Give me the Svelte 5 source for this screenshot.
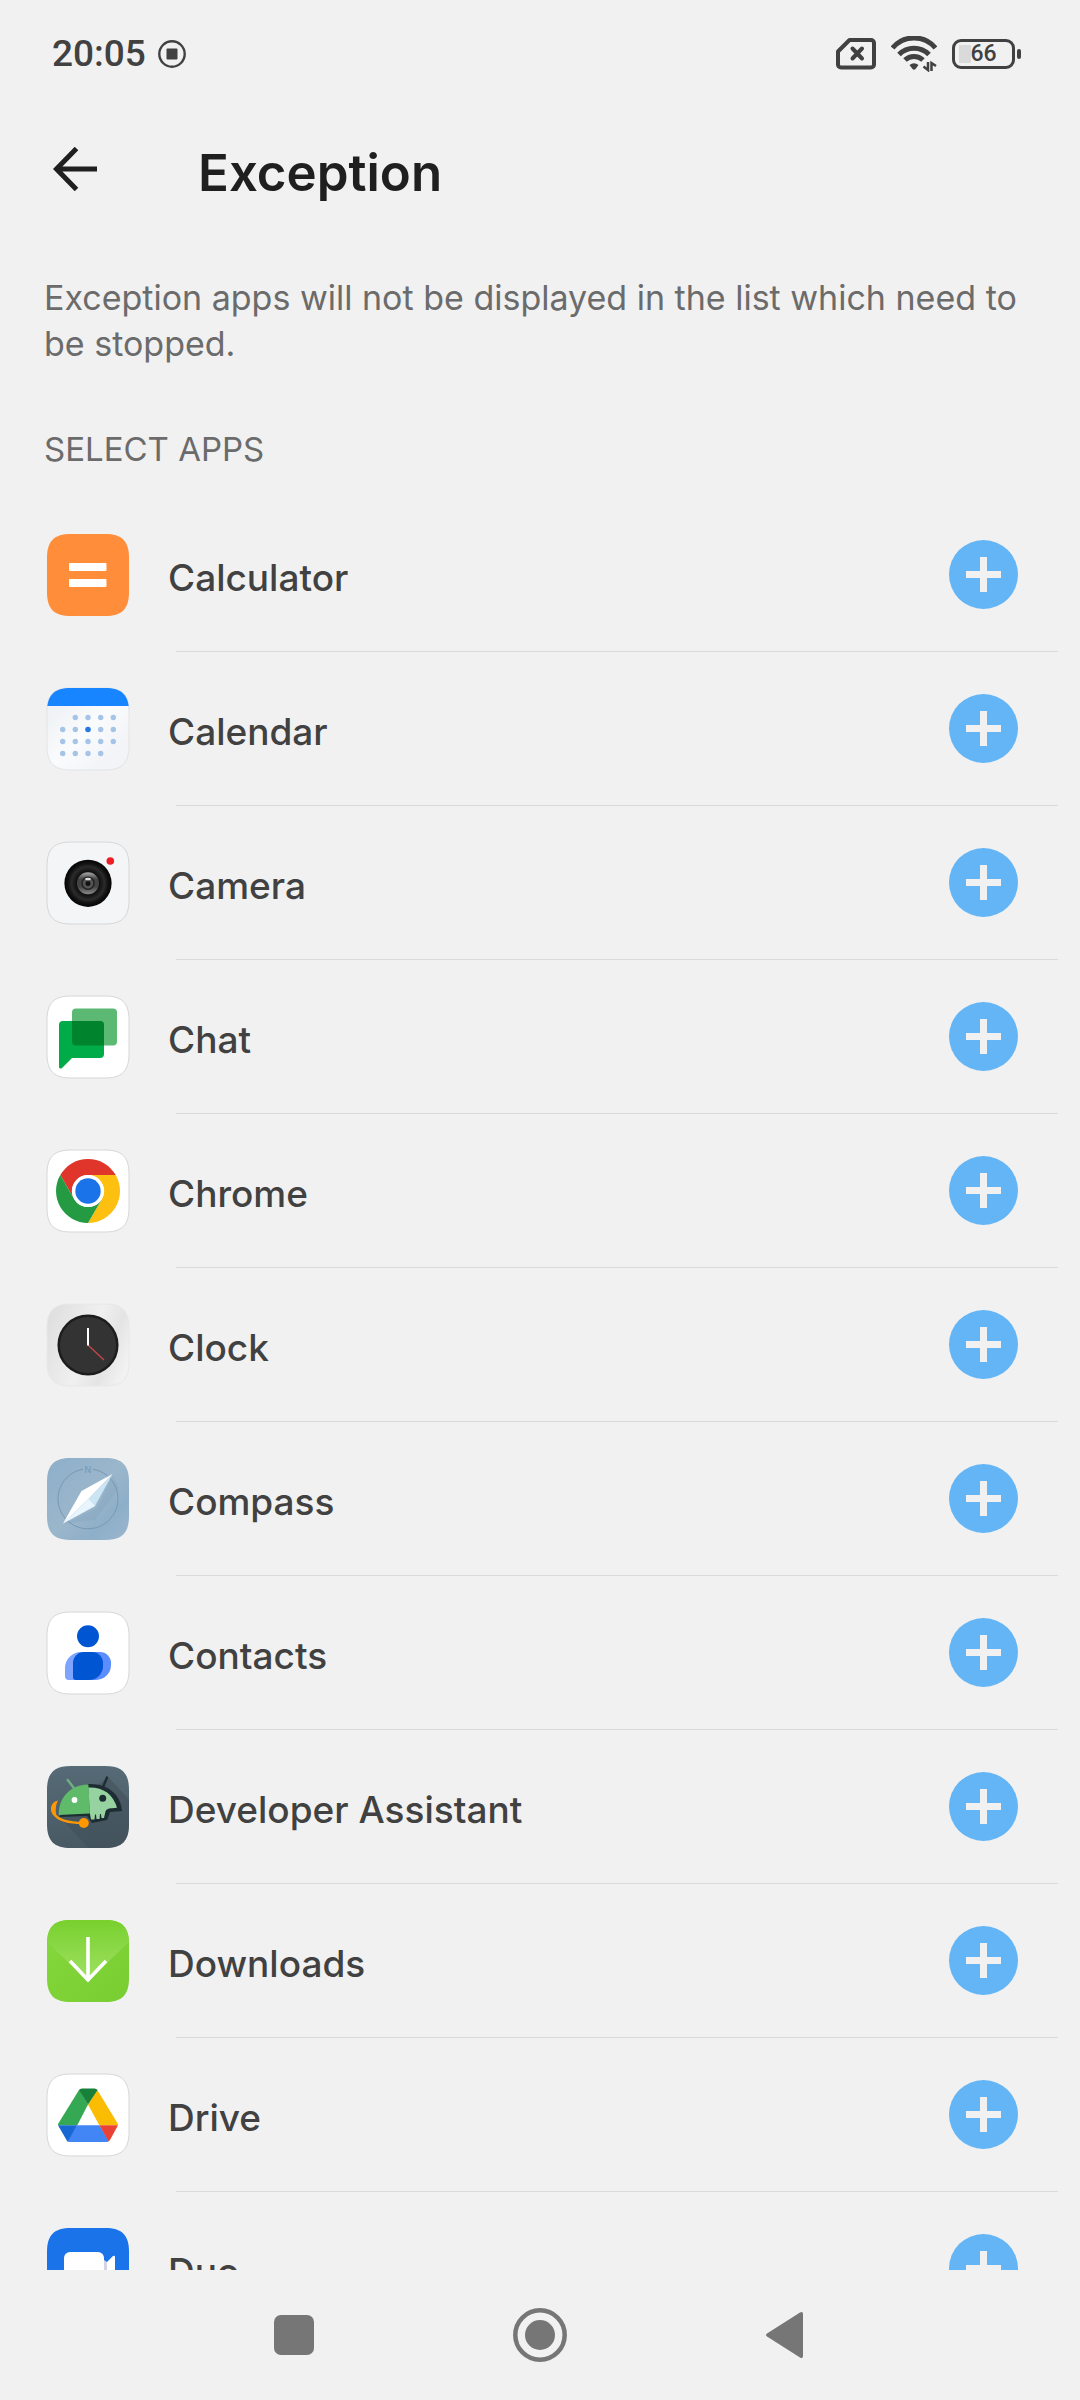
<script lang="ts">
	type App = { id: string; name: string };

	const apps: App[] = [
		{ id: 'calculator', name: 'Calculator' },
		{ id: 'calendar', name: 'Calendar' },
		{ id: 'camera', name: 'Camera' },
		{ id: 'chat', name: 'Chat' },
		{ id: 'chrome', name: 'Chrome' },
		{ id: 'clock', name: 'Clock' },
		{ id: 'compass', name: 'Compass' },
		{ id: 'contacts', name: 'Contacts' },
		{ id: 'developer', name: 'Developer Assistant' },
		{ id: 'downloads', name: 'Downloads' },
		{ id: 'drive', name: 'Drive' },
		{ id: 'duo', name: 'Duo' }
	];

	// rounded tile shared by every launcher icon
	const tile =
		'M0 24C0 7 7 0 24 0H58C75 0 82 7 82 24V58C82 75 75 82 58 82H24C7 82 0 75 0 58Z';

	const calendarRows = [
		{ y: 29.5, xs: [28.3, 41, 53.7, 66.3] },
		{ y: 41.5, xs: [15.7, 28.3, 53.7, 66.3] },
		{ y: 53.5, xs: [15.7, 28.3, 41, 53.7, 66.3] },
		{ y: 65.5, xs: [15.7, 28.3, 41, 53.7] }
	];
</script>

{#snippet appIcon(id: string)}
	<svg class="app-icon" viewBox="0 0 82 82" aria-hidden="true">
		{#if id === 'calculator'}
			<path d={tile} fill="#ff8d3a" />
			<rect x="22" y="29" width="37.5" height="8" rx="1" fill="#fff" />
			<rect x="22" y="45" width="37.5" height="8" rx="1" fill="#fff" />
		{:else if id === 'calendar'}
			<defs>
				<linearGradient id="cal-bg" x1="0" y1="0" x2="1" y2="1">
					<stop offset="0.2" stop-color="#f0f3f6" />
					<stop offset="0.5" stop-color="#fafbfc" />
					<stop offset="0.8" stop-color="#f2f4f8" />
				</linearGradient>
				<clipPath id="cal-clip"><path d={tile} /></clipPath>
			</defs>
			<path d={tile} fill="url(#cal-bg)" stroke="#e2e4e7" />
			<rect width="82" height="18" fill="#1685ff" clip-path="url(#cal-clip)" />
			{#each calendarRows as row}
				{#each row.xs as x}
					<circle cx={x} cy={row.y} r="2.7" fill="#a5c4e8" />
				{/each}
			{/each}
			<circle cx="41" cy="41.5" r="2.8" fill="#2878e6" />
		{:else if id === 'camera'}
			<defs>
				<radialGradient id="cam-lens">
					<stop offset="0" stop-color="#555" />
					<stop offset="0.35" stop-color="#2a2a2a" />
					<stop offset="0.5" stop-color="#111" />
					<stop offset="0.7" stop-color="#2b2b2b" />
					<stop offset="0.85" stop-color="#111" />
					<stop offset="1" stop-color="#050505" />
				</radialGradient>
				<linearGradient id="cam-glass" x1="0" y1="0" x2="0" y2="1">
					<stop offset="0" stop-color="#aaa" />
					<stop offset="0.3" stop-color="#444" />
					<stop offset="0.65" stop-color="#444" />
					<stop offset="1" stop-color="#8a8a8a" />
				</linearGradient>
			</defs>
			<path d={tile} fill="#f4f5f7" stroke="#d6d7d9" />
			<circle cx="41" cy="41.3" r="23.6" fill="url(#cam-lens)" />
			<circle cx="41" cy="41.3" r="11" fill="url(#cam-glass)" />
			<circle cx="41" cy="41.3" r="6" fill="#555" stroke="#222" stroke-width="1.5" />
			<circle cx="41" cy="41.5" r="2.5" fill="#111" />
			<ellipse cx="41" cy="37" rx="3" ry="1.3" fill="#ddd" />
			<circle cx="63.3" cy="19" r="3.8" fill="#ee1c25" />
		{:else if id === 'chat'}
			<path d={tile} fill="#fff" stroke="#d6d7d9" />
			<rect x="25" y="12.5" width="45" height="37" rx="4" fill="#5bb974" />
			<path
				d="M16 25H53a4 4 0 0 1 4 4V58a4 4 0 0 1-4 4H25L15 72C14 73 12 72.5 12 71V29a4 4 0 0 1 4-4Z"
				fill="#00ac47"
			/>
			<path d="M25 25H53a4 4 0 0 1 4 4V49.5H29a4 4 0 0 1-4-4Z" fill="#00832d" />
		{:else if id === 'chrome'}
			<path d={tile} fill="#fff" stroke="#d6d7d9" />
			<path d="M13.3 25A32 32 0 0 1 68.7 25H41A16 16 0 0 0 27.1 49Z" fill="#e0352b" />
			<path d="M68.7 25A32 32 0 0 1 41 73L54.9 49A16 16 0 0 0 41 25Z" fill="#fdc010" />
			<path d="M41 73A32 32 0 0 1 13.3 25L27.1 49A16 16 0 0 0 54.9 49Z" fill="#249a42" />
			<circle cx="41" cy="41" r="16" fill="#fff" />
			<circle cx="41" cy="41" r="12.7" fill="#1a73e8" />
		{:else if id === 'clock'}
			<defs>
				<linearGradient id="clock-bg" x1="0" y1="0.3" x2="1" y2="0.7">
					<stop offset="0" stop-color="#e0e0e0" />
					<stop offset="0.5" stop-color="#f0f0f0" />
					<stop offset="0.75" stop-color="#e4e4e4" />
					<stop offset="1" stop-color="#f2f2f2" />
				</linearGradient>
			</defs>
			<path d={tile} fill="url(#clock-bg)" stroke="#e8e8e8" />
			<circle cx="41" cy="41" r="29.3" fill="#333" stroke="#1d1d1d" stroke-width="2.5" />
			<path d="M41 41L57 56" stroke="#c9474c" stroke-width="1.3" />
			<path d="M41 24V41.5" stroke="#fff" stroke-width="2" />
		{:else if id === 'compass'}
			<defs>
				<linearGradient id="compass-bg" x1="0" y1="0" x2="1" y2="1">
					<stop offset="0" stop-color="#8eafca" />
					<stop offset="0.5" stop-color="#9ab6cb" />
					<stop offset="0.75" stop-color="#8eafc9" />
					<stop offset="1" stop-color="#9bb5cd" />
				</linearGradient>
			</defs>
			<path d={tile} fill="url(#compass-bg)" />
			<path d="M46 11.2A30 30 0 1 1 36 11.2" fill="none" stroke="#7898b3" />
			<text class="north" x="41" y="15" text-anchor="middle">N</text>
			<path d="M17 66L50 50L66 17L72 30L48 62Z" fill="#7597b2" opacity="0.18" />
			<path d="M65.5 16L34.5 33L16 65.5L41.5 41Z" fill="#fff" />
			<path d="M65.5 16L48 48L16 65.5L41.5 41Z" fill="#cce5f5" />
			<path d="M41.5 41L48 48L16 65.5Z" fill="#e9f5fc" />
		{:else if id === 'contacts'}
			<path d={tile} fill="#fff" stroke="#d6d7d9" />
			<circle cx="41" cy="24.3" r="11" fill="#0056d2" />
			<path d="M34 40H42V68H22a4 4 0 0 1-4-4V56A16 16 0 0 1 34 40Z" fill="#7da5ff" />
			<path d="M38 40H53a11 11 0 0 1 11 11V53A15 15 0 0 1 49 68H38Z" fill="#5c8dff" />
			<path
				d="M37 40H45a11 11 0 0 1 11 11V54A14 14 0 0 1 42 68H29a3 3 0 0 1-3-3V51A11 11 0 0 1 37 40Z"
				fill="#0056d2"
			/>
		{:else if id === 'developer'}
			<defs>
				<linearGradient id="dev-bg" x1="0" y1="0" x2="0" y2="1">
					<stop offset="0" stop-color="#566b77" />
					<stop offset="1" stop-color="#485963" />
				</linearGradient>
				<clipPath id="dev-clip"><path d={tile} /></clipPath>
			</defs>
			<path d={tile} fill="url(#dev-bg)" />
			<path d="M12 50L45 86H90V42L61 11Z" fill="#3d4c55" opacity="0.45" clip-path="url(#dev-clip)" />
			<path d="M20.7 14L28 23.5" stroke="#6faf83" stroke-width="2.4" stroke-linecap="round" />
			<path d="M60 11.5L56 21" stroke="#1e2c33" stroke-width="2.4" stroke-linecap="round" />
			<path d="M41 18C60 17 74 28 75 45L63 46L60 54L45 57L40 50L12 51Z" fill="#1e2c33" />
			<path d="M11.8 49C11 32 24 18 41.4 18.5L42.9 47.5Z" fill="#5fba69" />
			<path
				d="M41.4 21.5C56 21 66 28 70 41.5C66 43 61 41 58.6 45L57 52H54.5L54 48H53L52.5 53H49.5L49 48.5H48L47.5 53.5H44L42.9 47.5Z"
				fill="#97d3a0"
			/>
			<circle cx="27.5" cy="34" r="2.9" fill="#fff" />
			<circle cx="55.7" cy="32.3" r="3.5" fill="#1e2c33" />
			<path d="M11 34.5C9 38 8 44 9.5 50L6 49C2 43 4 36 11 34.5Z" fill="#ff9800" />
			<path d="M7 48C12 55 23 57 36 57" fill="none" stroke="#ff9800" stroke-width="2.2" />
			<circle cx="36.8" cy="57" r="5" fill="#ff9800" />
		{:else if id === 'downloads'}
			<defs>
				<linearGradient id="down-top" x1="0" y1="0" x2="0" y2="1">
					<stop offset="0" stop-color="#78d02d" />
					<stop offset="1" stop-color="#a0e165" />
				</linearGradient>
				<linearGradient id="down-bg" x1="0" y1="0" x2="1" y2="1">
					<stop offset="0" stop-color="#85d83d" />
					<stop offset="1" stop-color="#78cd30" />
				</linearGradient>
				<clipPath id="down-clip"><path d={tile} /></clipPath>
			</defs>
			<path d={tile} fill="url(#down-bg)" />
			<path d="M0 0H82V22L41 61L0 22Z" fill="url(#down-top)" clip-path="url(#down-clip)" />
			<path d="M41 17V60M23 41L41 60L59 41" fill="none" stroke="#fff" stroke-width="3.6" />
		{:else if id === 'drive'}
			<path d={tile} fill="#fff" stroke="#d6d7d9" />
			<path d="M32.3 15.5L11 50V51.3H30.3L41 30.5Z" fill="#34a853" />
			<path d="M50 15.5L71 50V51.3H52.3L41 30.5Z" fill="#fbbc04" />
			<path d="M32 16Q33 14.5 35 14.5H47.5Q49.5 14.5 50.5 16L41 30.5Z" fill="#188038" />
			<path d="M30.3 51.3H52.3L62 67Q61 68 59.5 68H23Q21 68 20 67Z" fill="#4285f4" />
			<path d="M11 51.3H30.3L20.7 67.5L19.5 66Z" fill="#1967d2" />
			<path d="M71 51.3H52.3L61.7 67.5L63 66Z" fill="#ea4335" />
		{:else}
			<path d={tile} fill="#1a73e8" />
			<path d="M58 36L66 28Q68 27 68 29V54Q68 56 66 55L58 47Z" fill="#fff" />
			<rect x="17" y="24" width="40" height="35" rx="6" fill="#fff" />
			<path d="M57 32V51L60 48V34Z" fill="#d5d3e5" />
		{/if}
	</svg>
{/snippet}

<div class="screen">
	<div class="status-bar">
		<span class="time">20:05</span>
		<svg class="record" width="28" height="28" viewBox="0 0 28 28" aria-hidden="true">
			<circle cx="14" cy="14" r="12.7" fill="none" stroke="currentColor" stroke-width="2.4" />
			<rect x="8.5" y="8.5" width="11" height="11" rx="1" fill="currentColor" />
		</svg>

		<div class="indicators">
			<svg width="40" height="32" viewBox="0 0 40 32" aria-hidden="true">
				<path
					d="M13.5 2H35a3 3 0 0 1 3 3V26.500a3 3 0 0 1-3 3H5a3 3 0 0 1-3-3V13.500Z"
					fill="none"
					stroke="currentColor"
					stroke-width="4"
					stroke-linejoin="round"
				/>
				<path
					d="M16.5 10.5L26 20.5M26 10.5L16.5 20.5"
					stroke="currentColor"
					stroke-width="4"
					stroke-linecap="round"
				/>
			</svg>
			<svg width="46" height="36" viewBox="0 0 46 36" aria-hidden="true">
				<g fill="none" stroke="currentColor" stroke-width="5">
					<path d="M1.5 12A28 28 0 0 1 44.5 12" />
					<path d="M8 18.5A21 21 0 0 1 38 18.5" />
					<path d="M14 24A13 13 0 0 1 32 24" />
				</g>
				<path d="M18.5 29Q23 25.5 27.5 29L24.5 33Q23 34.5 21.5 33Z" fill="currentColor" />
				<path
					d="M37 26V34L32.5 30.5M40.5 35V27L45 30"
					fill="none"
					stroke="currentColor"
					stroke-width="2.5"
				/>
			</svg>
			<div class="battery">
				<div class="battery-case"><span>66</span></div>
				<div class="battery-tip"></div>
			</div>
		</div>
	</div>

	<header>
		<button class="back" aria-label="Back">
			<svg width="44" height="44" viewBox="0 0 44 44" aria-hidden="true">
				<path
					d="M23.5 1.5L3.5 22L23.5 42.5M3.5 22H44"
					fill="none"
					stroke="currentColor"
					stroke-width="5"
				/>
			</svg>
		</button>
		<h1>Exception</h1>
	</header>

	<main>
		<p>Exception apps will not be displayed in the list which need to be stopped.</p>
		<h2>SELECT APPS</h2>
		<ul>
			{#each apps as app (app.id)}
				<li>
					{@render appIcon(app.id)}
					<div class="row">
						<span class="name">{app.name}</span>
						<button class="add" aria-label="Add {app.name}">
							<svg width="35" height="35" viewBox="0 0 35 35" aria-hidden="true">
								<path d="M17.5 0V35M0 17.5H35" stroke="currentColor" stroke-width="7" />
							</svg>
						</button>
					</div>
				</li>
			{/each}
		</ul>
	</main>

	<nav>
		<button aria-label="Recent apps">
			<svg width="40" height="40" viewBox="0 0 40 40"><rect width="40" height="40" rx="7" fill="currentColor" /></svg>
		</button>
		<button aria-label="Home">
			<svg width="54" height="54" viewBox="0 0 54 54">
				<circle cx="27" cy="27" r="24.7" fill="none" stroke="currentColor" stroke-width="4.5" />
				<circle cx="27" cy="27" r="15" fill="currentColor" />
			</svg>
		</button>
		<button aria-label="Back">
			<svg width="40" height="48" viewBox="0 0 40 48">
				<path
					d="M1 22.5L34 1.5Q37 0 37 3V45Q37 48 34 46.5L1 25.5Q-1 24 1 22.5Z"
					fill="currentColor"
				/>
			</svg>
		</button>
	</nav>
</div>

<style>
	:global(body) {
		margin: 0;
		background: #f1f1f1;
	}

	.screen {
		display: flex;
		flex-direction: column;
		height: 100vh;
		background: #f1f1f1;
		color: #414141;
		font-family: Inter, 'Liberation Sans', sans-serif;
	}

	button {
		display: flex;
		align-items: center;
		justify-content: center;
		padding: 0;
		border: 0;
		background: none;
		color: inherit;
		cursor: pointer;
	}

	svg {
		display: block;
		flex: none;
	}

	.status-bar {
		display: flex;
		align-items: center;
		flex: none;
		gap: 12px;
		height: 108px;
		padding: 0 59px 0 52px;
		font-family: Roboto, sans-serif;
	}

	.time {
		font-size: 37px;
		font-weight: 500;
		line-height: 46px;
	}

	.indicators {
		display: flex;
		align-items: center;
		gap: 15px;
		margin-left: auto;
	}

	.battery {
		display: flex;
		align-items: center;
		gap: 2px;
	}

	.battery-case {
		display: flex;
		align-items: center;
		justify-content: center;
		box-sizing: border-box;
		width: 63px;
		height: 30px;
		border: 3px solid #414141;
		border-radius: 9px;
		background: linear-gradient(#dadada, #dadada) 4px 3px / 12px 18px no-repeat;
		font-size: 23px;
		font-weight: 500;
		line-height: 24px;
	}

	.battery-tip {
		width: 4px;
		height: 10px;
		border-radius: 2px;
		background: #414141;
	}

	header {
		display: flex;
		align-items: center;
		flex: none;
		gap: 101px;
		height: 122px;
		padding: 0 44px 0 53px;
		color: #1f1f1f;
	}

	h1 {
		margin: 0;
		padding-top: 8px;
		font-size: 51px;
		font-weight: 600;
		line-height: 64px;
	}

	main {
		flex: 1;
		min-height: 0;
		overflow-y: auto;
		scrollbar-width: none;
	}

	p,
	h2 {
		margin: 0;
		padding: 0 44px;
		color: #6b6b6b;
		font-weight: 400;
		line-height: 46px;
	}

	p {
		padding-top: 45px;
		font-size: 34px;
	}

	h2 {
		padding-top: 59px;
		font-size: 33px;
	}

	ul {
		margin: 26px 0 0;
		padding: 0;
		list-style: none;
	}

	li {
		display: flex;
		align-items: center;
		height: 154px;
		padding: 0 22px 0 47px;
	}

	.app-icon {
		width: 82px;
		height: 82px;
		overflow: visible;
	}

	.north {
		fill: #7898b3;
		font-size: 9px;
	}

	.row {
		position: relative;
		display: flex;
		align-items: center;
		justify-content: space-between;
		flex: 1;
		box-sizing: border-box;
		height: 100%;
		padding: 0 40px 1px 39px;
	}

	.row::after {
		content: '';
		position: absolute;
		right: 0;
		bottom: 0;
		left: 47px;
		height: 1px;
		background: #d9dbdb;
	}

	.name {
		padding-top: 6px;
		font-size: 37px;
		font-weight: 500;
		line-height: 46px;
	}

	.add {
		width: 69px;
		height: 69px;
		border-radius: 50%;
		background: #64b5f6;
		color: #f1f1f1;
	}

	nav {
		display: flex;
		justify-content: center;
		flex: none;
		height: 130px;
		background: #f1f1f1;
		color: #767676;
	}

	nav button {
		width: 246px;
	}
</style>
